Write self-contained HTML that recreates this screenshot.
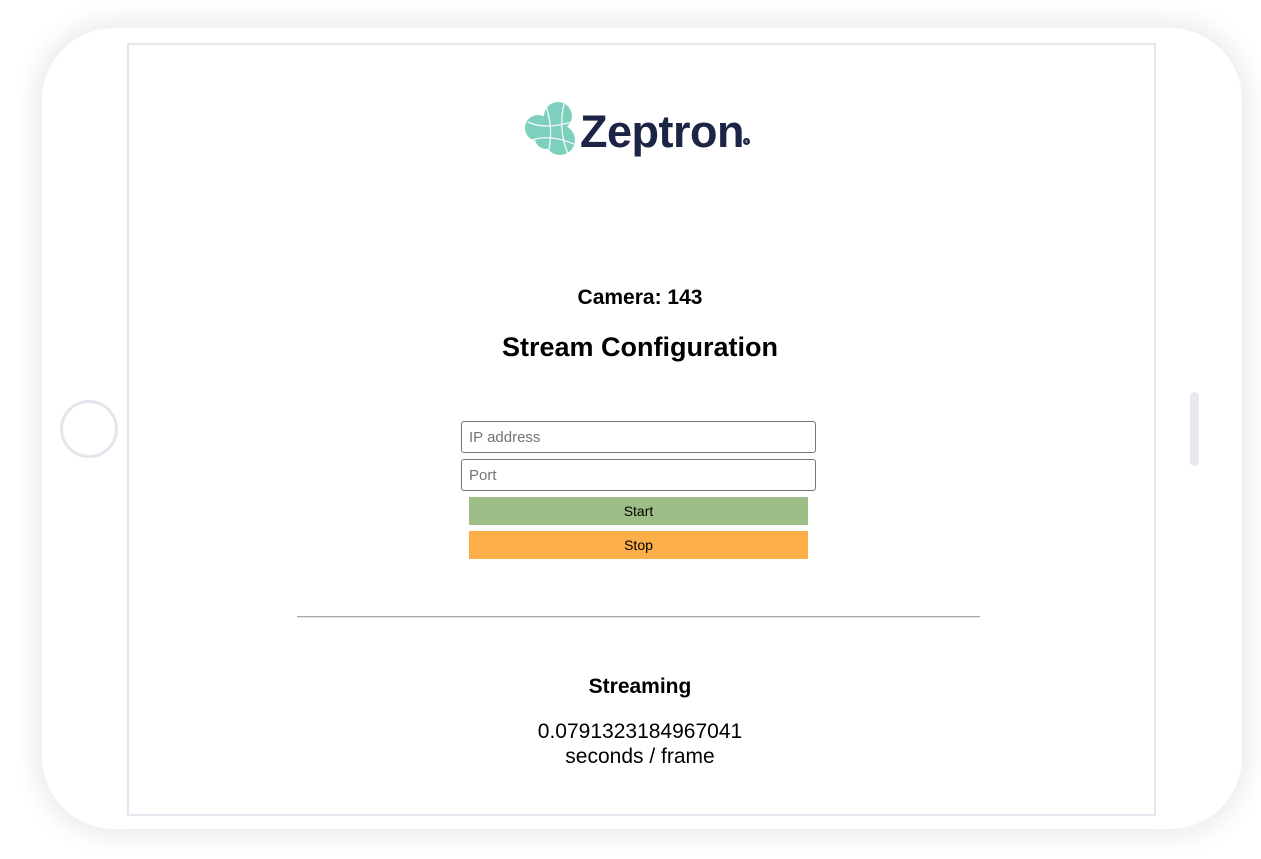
<!DOCTYPE html>
<html><head><meta charset="utf-8"><style>
html,body{margin:0;padding:0;background:#fff;width:1261px;height:859px;overflow:hidden;font-family:"Liberation Sans",Arial,sans-serif;}
.frame{position:absolute;left:42px;top:28px;width:1200px;height:801px;border-radius:72px;background:#fff;box-shadow:0 0 24px 8px rgba(0,0,0,0.08);}
.screen{position:absolute;left:127px;top:43px;width:1025px;height:769px;border:2px solid #e3e8ee;background:#fff;}
.home{position:absolute;left:60px;top:400px;width:52px;height:52px;border-radius:50%;border:3px solid #e3e6ec;}
.side{position:absolute;left:1190px;top:392px;width:9px;height:74px;border-radius:5px;background:#e6e9ee;}
.c{position:absolute;left:127px;width:1026px;text-align:center;color:#000;}
input{position:absolute;left:461px;width:355px;height:32px;border:1px solid #767676;border-radius:3px;box-sizing:border-box;padding:0 7px;font-size:15px;font-family:"Liberation Sans",Arial,sans-serif;color:#757575;}
.btn{position:absolute;left:469px;width:339px;height:28px;font-size:14px;line-height:28px;text-align:center;}
</style></head><body>
<div class="frame"></div>
<div class="screen"></div>
<div class="home"></div>
<div class="side"></div>
<svg style="position:absolute;left:524px;top:100px" width="56" height="58" viewBox="0 0 56 58">
<g fill="#7dd0be"><circle cx="14" cy="28" r="13"/><circle cx="34" cy="16" r="14"/><circle cx="36" cy="40" r="15"/><circle cx="22" cy="38" r="11"/></g>
<g stroke="#fff" stroke-width="1.3" fill="none" opacity="0.9"><path d="M4 22 Q20 30 48 22"/><path d="M8 40 Q26 34 50 44"/><path d="M22 6 Q30 30 24 54"/><path d="M40 4 Q34 30 44 54"/></g>
</svg>
<div style="position:absolute;left:580px;top:102px;font-size:45px;font-weight:bold;color:#1c2546;letter-spacing:-0.5px;line-height:60px;">Zeptron</div>
<div style="position:absolute;left:743px;top:138px;width:7px;height:7px;border-radius:50%;background:#1c2546;font-size:4px;color:#fff;text-align:center;line-height:7px">®</div>
<div class="c" style="top:286px;font-size:21px;font-weight:bold;">Camera: 143</div>
<div class="c" style="top:332px;font-size:27px;font-weight:bold;">Stream Configuration</div>
<input style="top:421px" placeholder="IP address">
<input style="top:459px" placeholder="Port">
<div class="btn" style="top:497px;background:#9dbf87">Start</div>
<div class="btn" style="top:531px;background:#fcae48">Stop</div>
<div style="position:absolute;left:297px;top:616px;width:683px;height:1px;background:#aaa;border-bottom:1px solid #e6e6e6"></div>
<div class="c" style="top:675px;font-size:21px;font-weight:bold;">Streaming</div>
<div class="c" style="top:719px;font-size:21px;line-height:25px;">0.0791323184967041<br>seconds / frame</div>
</body></html>
